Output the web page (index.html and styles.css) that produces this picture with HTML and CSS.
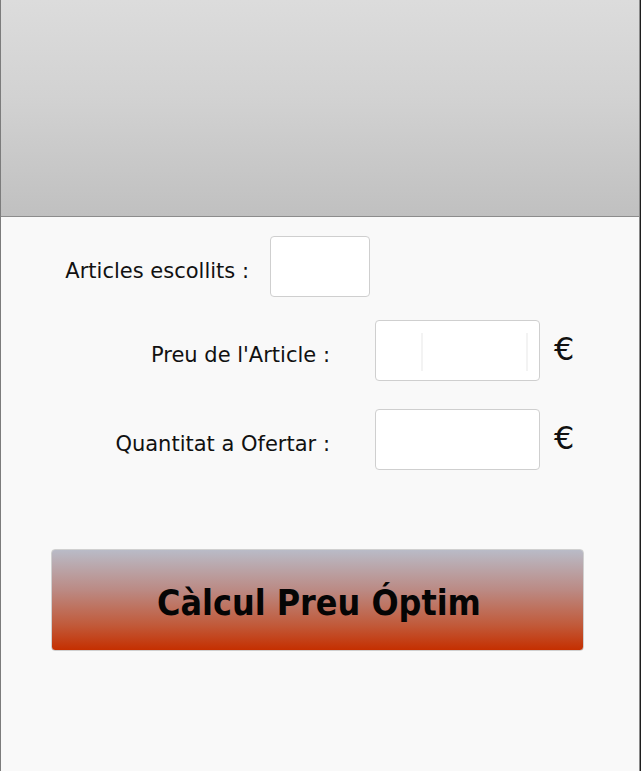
FILE: index.html
```html
<!DOCTYPE html>
<html>
<head>
<meta charset="utf-8">
<link rel="stylesheet" href="styles.css">
</head>
<body>
<div class="app">
  <header class="topbar"></header>
  <main class="form">
    <div class="row row-first">
      <label class="lbl lbl-first">Articles escollits :</label>
      <div class="field field-small"></div>
    </div>
    <div class="row row-second">
      <label class="lbl lbl-wide">Preu de l'Article :</label>
      <div class="field field-wide"><span class="ghost g1"></span><span class="ghost g2"></span></div>
      <span class="cur">€</span>
    </div>
    <div class="row row-third">
      <label class="lbl lbl-wide">Quantitat a Ofertar :</label>
      <div class="field field-wide"></div>
      <span class="cur">€</span>
    </div>
    <button class="calc">Càlcul Preu Óptim</button>
  </main>
</div>
</body>
</html>
```
FILE: styles.css
```css
html, body {
  margin: 0;
  padding: 0;
  background: #1e1e1e;
  height: 771px;
  overflow: hidden;
}
.app {
  width: 638px;
  height: 771px;
  border-left: 1px solid #7c7c7c;
  border-right: 1px solid #8a8a8a;
  background: #f9f9f9;
  font-family: "DejaVu Sans", Verdana, sans-serif;
  color: #111;
}
.topbar {
  height: 216px;
  border-bottom: 1px solid #8c8c8c;
  background: linear-gradient(to bottom, #dcdcdc 0%, #d2d2d2 45%, #c0c0c0 100%);
}
.form {
  display: flex;
  flex-direction: column;
}
.row {
  display: flex;
  align-items: center;
  height: 61px;
}
.row-first { margin-top: 19px; }
.row-second { margin-top: 23px; }
.row-third { margin-top: 28px; }
.lbl {
  font-size: 21px;
  text-align: right;
  padding-top: 9px;
  white-space: nowrap;
}
.lbl-first {
  width: 248px;
  margin-right: 21px;
}
.lbl-wide {
  width: 329px;
  margin-right: 45px;
}
.field {
  box-sizing: border-box;
  height: 61px;
  background: #ffffff;
  border: 1px solid #cfcfcf;
  border-radius: 4px;
  position: relative;
}
.field-small { width: 100px; }
.field-wide { width: 165px; }
.ghost {
  position: absolute;
  top: 12px;
  width: 2px;
  height: 38px;
  background: #f3f3f3;
}
.g1 { left: 45px; }
.g2 { left: 150px; }
.cur {
  font-size: 32px;
  margin-left: 14px;
  margin-top: -4px;
}
.calc {
  margin: 79px 0 0 50px;
  width: 533px;
  height: 102px;
  box-sizing: border-box;
  border: 1px solid #d0d0d0;
  border-radius: 4px;
  background: linear-gradient(to bottom, #b9bbc7 0%, #bb8a84 40%, #c15a3a 75%, #c52f00 100%);
  font-family: "DejaVu Sans", Verdana, sans-serif;
  font-stretch: condensed;
  font-weight: bold;
  font-size: 35.5px;
  color: #050505;
  padding: 4px 0 0 3px;
}
```
